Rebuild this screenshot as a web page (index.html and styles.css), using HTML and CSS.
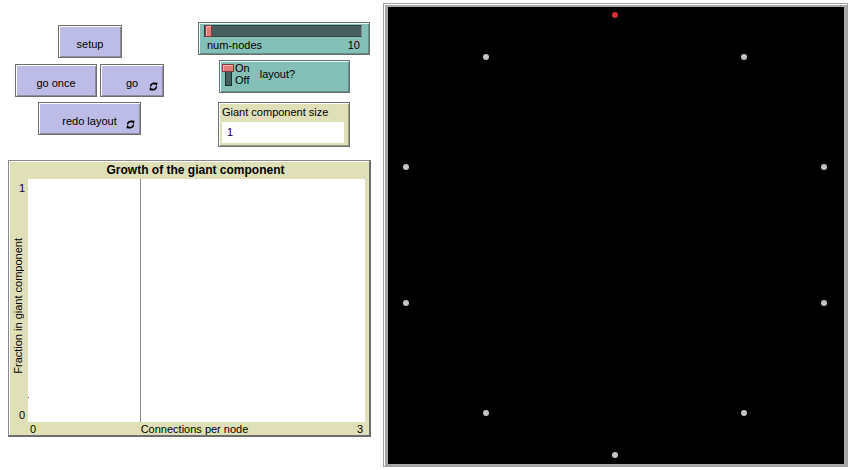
FILE: index.html
```html
<!DOCTYPE html>
<html>
<head>
<meta charset="utf-8">
<link rel="stylesheet" href="styles.css">
</head>
<body>
<div class="app">
  <div class="left">
    <div class="top">
      <div class="buttons">
        <div class="row row-setup"><div class="btn btn-setup">setup</div></div>
        <div class="row row-go">
          <div class="btn btn-once">go once</div>
          <div class="btn btn-go">go
            <svg class="forever" viewBox="0 0 10 10" width="9" height="9"><path d="M1.8 5 A3.3 3.3 0 0 1 7.2 2.4" fill="none" stroke="#000" stroke-width="1.8"/><path d="M5.6 0.6 L9.6 0.8 L8.6 4.6 Z" fill="#000"/><path d="M8.2 5 A3.3 3.3 0 0 1 2.8 7.6" fill="none" stroke="#000" stroke-width="1.8"/><path d="M4.4 9.4 L0.4 9.2 L1.4 5.4 Z" fill="#000"/></svg>
          </div>
        </div>
        <div class="row row-redo">
          <div class="btn btn-redo">redo layout
            <svg class="forever" viewBox="0 0 10 10" width="9" height="9"><path d="M1.8 5 A3.3 3.3 0 0 1 7.2 2.4" fill="none" stroke="#000" stroke-width="1.8"/><path d="M5.6 0.6 L9.6 0.8 L8.6 4.6 Z" fill="#000"/><path d="M8.2 5 A3.3 3.3 0 0 1 2.8 7.6" fill="none" stroke="#000" stroke-width="1.8"/><path d="M4.4 9.4 L0.4 9.2 L1.4 5.4 Z" fill="#000"/></svg>
          </div>
        </div>
      </div>
      <div class="widgets">
        <div class="slider">
          <div class="track"><div class="knob"></div></div>
          <div class="slider-labels"><span>num-nodes</span><span>10</span></div>
        </div>
        <div class="switch">
          <div class="toggle"><div class="toggle-body"></div><div class="toggle-knob"></div></div>
          <div class="onoff"><span>On</span><span>Off</span></div>
          <div class="switch-label">layout?</div>
        </div>
        <div class="monitor">
          <div class="monitor-label">Giant component size</div>
          <div class="monitor-value">1</div>
        </div>
      </div>
    </div>
    <div class="plot">
      <div class="plot-title">Growth of the giant component</div>
      <div class="yaxis">
        <span class="ytick ytop">1</span>
        <span class="ylabel">Fraction in giant component</span>
        <span class="ytick ybot">0</span>
      </div>
      <div class="plot-area">
        <div class="vline"></div>
        <div class="redpt"></div>
      </div>
      <div class="xaxis"><span class="xl">0</span><span class="xm">Connections per node</span><span class="xr">3</span></div>
    </div>
  </div>
  <div class="view">
    <div class="world">
      <div class="node red" style="left:227px;top:8px"></div>
      <div class="node" style="left:356.3px;top:50px"></div>
      <div class="node" style="left:436.2px;top:160px"></div>
      <div class="node" style="left:436.2px;top:296px"></div>
      <div class="node" style="left:356.3px;top:406px"></div>
      <div class="node" style="left:227px;top:448px"></div>
      <div class="node" style="left:97.7px;top:406px"></div>
      <div class="node" style="left:17.8px;top:296px"></div>
      <div class="node" style="left:17.8px;top:160px"></div>
      <div class="node" style="left:97.7px;top:50px"></div>
    </div>
  </div>
</div>
</body>
</html>
```
FILE: styles.css
```css
* { box-sizing: border-box; }
html, body { margin: 0; padding: 0; background: #fff; }
body {
  font-family: "Liberation Sans", Arial, sans-serif;
  font-size: 11px;
  color: #000;
  width: 852px;
  height: 470px;
  overflow: hidden;
}
.app { display: flex; align-items: flex-start; }
.left { width: 383px; flex: none; }
.top { display: flex; margin-top: 22px; height: 122px; }
.buttons { width: 198px; flex: none; }
.row { display: flex; }
.row-setup { margin-top: 3px; padding-left: 58px; }
.row-go { margin-top: 6px; padding-left: 15px; gap: 3px; }
.row-redo { margin-top: 5px; padding-left: 38px; }

.btn {
  position: relative;
  height: 33px;
  background: #bcbce6;
  border: 1px solid #6e6e6e;
  box-shadow: inset 1px 1px 0 #fff, inset -1px -1px 0 #8e8e9e;
  display: flex;
  align-items: center;
  justify-content: center;
  padding-top: 5px;
  color: #000;
}
.btn-setup { width: 64px; }
.btn-once { width: 82px; }
.btn-go { width: 64px; }
.btn-redo { width: 103px; }
.forever { position: absolute; right: 5px; bottom: 5px; }

.widgets { width: 172px; flex: none; }
.slider {
  position: relative;
  width: 172px;
  height: 33px;
  background: #84c0b8;
  border: 1px solid #6e6e6e;
  box-shadow: inset 1px 1px 0 #dff, inset -1px -1px 0 #5f8f89;
  padding: 2px 7px 0 5px;
}
.track {
  position: relative;
  height: 12px;
  background: #445f5d;
  border: 1px solid #2e4341;
  border-right-color: #889;
}
.knob {
  position: absolute;
  left: 0;
  top: -1px;
  width: 7px;
  height: 12px;
  background: #e07c7c;
  border: 1px solid #8a3a3a;
  box-shadow: inset 1px 1px 0 #f4b4b4;
}
.slider-labels {
  display: flex;
  justify-content: space-between;
  padding: 0 2px 0 3px;
  margin-top: 1px;
  line-height: 14px;
}
.switch {
  position: relative;
  margin-top: 5px;
  margin-left: 21px;
  width: 131px;
  height: 33px;
  background: #84c0b8;
  border: 1px solid #6e6e6e;
  box-shadow: inset 1px 1px 0 #dff, inset -1px -1px 0 #5f8f89;
  display: flex;
  align-items: flex-start;
}
.toggle { position: relative; width: 12px; height: 23px; margin: 3px 0 0 2px; flex: none; }
.toggle-body {
  position: absolute; left: 3px; top: 6px; width: 7px; height: 16px;
  background: #445f5d; border: 1px solid #1e2e2d;
}
.toggle-knob {
  position: absolute; left: 0; top: 0; width: 12px; height: 8px;
  background: #e07c7c; border: 1px solid #8a3a3a;
  box-shadow: inset 1px 1px 0 #f4b4b4;
}
.onoff { display: flex; flex-direction: column; margin-left: 1px; margin-top: 1px; line-height: 12px; font-size: 11px; }
.switch-label { margin-left: 10px; margin-top: 7px; }
.monitor {
  margin-top: 9px;
  margin-left: 20px;
  width: 132px;
  height: 45px;
  background: #e0e0b8;
  border: 1px solid #6e6e6e;
  box-shadow: inset 1px 1px 0 #fff, inset -1px -1px 0 #9e9e86;
  padding: 3px 5px 0 3px;
}
.monitor-label { line-height: 13px; }
.monitor-value {
  margin-top: 3px;
  height: 21px;
  background: #fff;
  padding-left: 5px;
  line-height: 21px;
}

.plot {
  margin-top: 16px;
  margin-left: 8px;
  width: 363px;
  height: 277px;
  background: #e0e0b8;
  border: 1px solid #8a8a8a;
  border-right: 2px solid #6e6e6e;
  border-bottom: 2px solid #6e6e6e;
  box-shadow: inset 1px 1px 0 #fff;
  display: grid;
  grid-template-columns: 19px 337px 4px;
  grid-template-rows: 18px 243px 13px;
}
.plot-title {
  grid-column: 1 / 4;
  grid-row: 1;
  text-align: center;
  font-weight: bold;
  font-size: 12px;
  line-height: 18px;
  padding-left: 13px;
}
.yaxis {
  grid-column: 1;
  grid-row: 2;
  display: flex;
  flex-direction: column;
  justify-content: space-between;
  align-items: center;
}
.ytick { align-self: flex-end; padding-right: 3px; line-height: 12px; }
.ytop { margin-top: 3px; }
.ybot { margin-bottom: 1px; }
.ylabel {
  writing-mode: vertical-rl;
  transform: rotate(180deg);
  line-height: 12px;
  margin-left: -1px;
  margin-top: 8px;
}
.plot-area {
  grid-column: 2;
  grid-row: 2;
  position: relative;
  background: #fff;
}
.vline { position: absolute; left: 112px; top: 0; bottom: 0; width: 1px; background: #8a8a8a; }
.redpt { position: absolute; left: 0; top: 218px; width: 1px; height: 1px; background: #c03030; }
.xaxis {
  grid-column: 2;
  grid-row: 3;
  display: grid;
  grid-template-columns: 1fr auto 1fr;
  line-height: 14px;
  padding: 0 2px 0 2px;
}
.xl { justify-self: start; }
.xm { margin-left: -4px; }
.xr { justify-self: end; }

.view {
  margin-top: 3px;
  flex: none;
  width: 465px;
  height: 464px;
  background: #a8a8a8;
  border: 1px solid #a0a0a0;
  box-shadow: inset 1px 1px 0 #fff;
  padding: 3px 3px 2px 4px;
}
.world {
  position: relative;
  width: 456px;
  height: 457px;
  background: #000;
}
.node {
  position: absolute;
  width: 6px;
  height: 6px;
  border-radius: 50%;
  background: #c4c4c4;
  transform: translate(-50%, -50%);
}
.node.red { background: #d03030; }
```
